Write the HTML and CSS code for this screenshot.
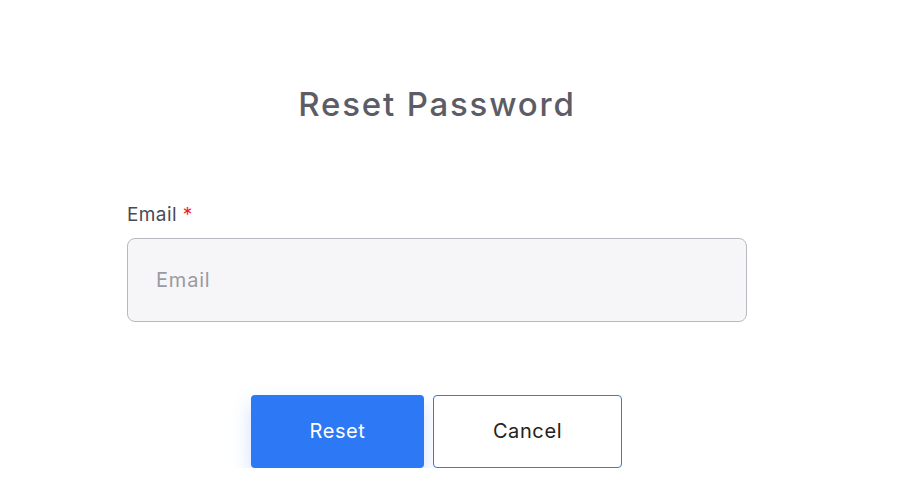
FILE: index.html
```html
<!DOCTYPE html>
<html lang="en">
<head>
<meta charset="utf-8">
<title>Reset Password</title>
<link rel="stylesheet" href="styles.css">
</head>
<body>
<main class="page">
  <h1 class="title">Reset Password</h1>
  <form class="form">
    <label class="label" for="email">Email <span class="req">*</span></label>
    <input class="input" id="email" type="email" placeholder="Email">
    <div class="actions">
      <button type="button" class="btn btn-primary">Reset</button>
      <button type="button" class="btn btn-outline">Cancel</button>
    </div>
  </form>
</main>
</body>
</html>
```
FILE: styles.css
```css
html, body {
  margin: 0;
  padding: 0;
  background: #ffffff;
}
body {
  font-family: Inter, "Noto Sans", sans-serif;
  color: #222222;
}
.page {
  width: 874px;
  display: flex;
  flex-direction: column;
  align-items: center;
  padding-top: 84px;
}
.title {
  margin: 0;
  font-size: 33px;
  line-height: 40px;
  font-weight: 500;
  color: #5c5c66;
  letter-spacing: 1.8px;
}
.form {
  width: 620px;
  display: flex;
  flex-direction: column;
  margin-top: 79px;
}
.label {
  font-size: 19px;
  line-height: 24px;
  color: #4a4a55;
  letter-spacing: 0.4px;
}
.req {
  color: #ee1c25;
}
.input {
  box-sizing: border-box;
  margin-top: 11px;
  width: 620px;
  height: 84px;
  border: 1px solid #b9b9c1;
  border-radius: 8px;
  background: #f6f6f9;
  padding: 0 28px;
  font-family: inherit;
  font-size: 20px;
  letter-spacing: 0.8px;
  color: #333;
  outline: none;
}
.input::placeholder {
  color: #9a9aa2;
}
.actions {
  display: flex;
  justify-content: flex-start;
  padding-left: 124px;
  gap: 9px;
  margin-top: 73px;
}
.btn {
  box-sizing: border-box;
  height: 73px;
  border-radius: 4px;
  font-family: inherit;
  font-size: 20px;
  letter-spacing: 0.6px;
  padding: 0 0 2px;
  cursor: pointer;
}
.btn-primary {
  width: 173px;
  background: #2d78f4;
  border: none;
  color: #ffffff;
  box-shadow: 0 8px 20px rgba(45, 120, 244, 0.22);
}
.btn-outline {
  width: 189px;
  background: #ffffff;
  border: 1px solid #3f74dc;
  color: #222222;
}
```
